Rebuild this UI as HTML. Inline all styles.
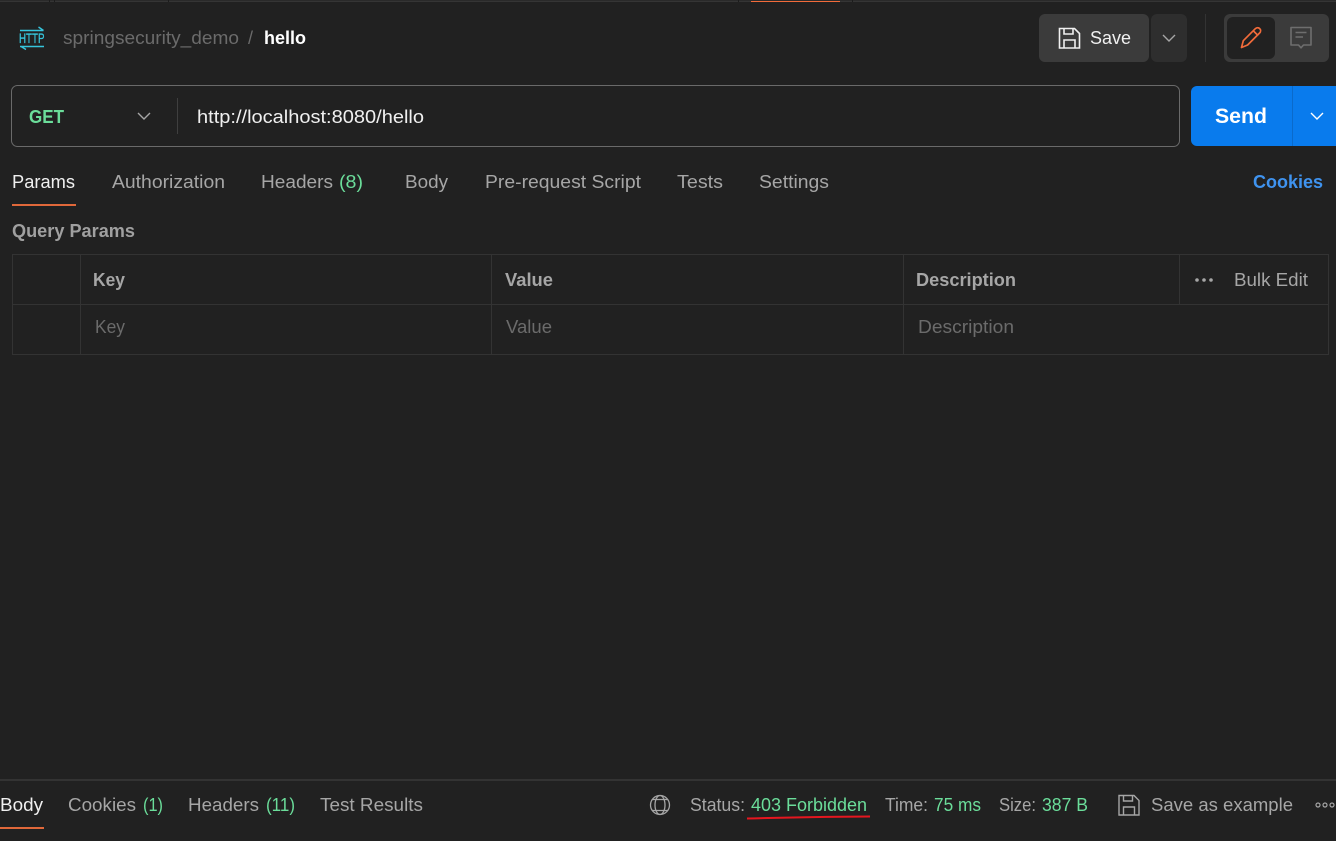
<!DOCTYPE html>
<html><head><meta charset="utf-8"><style>
html,body{margin:0;padding:0;background:#212121;width:1336px;height:841px;overflow:hidden}
svg{display:block}
text{font-family:"Liberation Sans",sans-serif;font-size:18px;fill:#a6a6a6}
.b{font-weight:700}
.g{fill:#6bdd9a}
.w{fill:#ffffff}
.d{fill:#6b6b6b}
</style></head><body>
<svg width="1336" height="841" viewBox="0 0 1336 841" xmlns="http://www.w3.org/2000/svg">
<rect width="1336" height="841" fill="#212121"/>
<!-- top edge -->
<rect x="0" y="0" width="1336" height="1" fill="#2a2a2a"/>
<rect x="0" y="1" width="1336" height="1" fill="#353535"/>
<g fill="#1c1c1c">
<rect x="49" y="0" width="1" height="2"/><rect x="54" y="0" width="1" height="2"/><rect x="168" y="0" width="1" height="2"/><rect x="738" y="0" width="1" height="2"/><rect x="852" y="0" width="1" height="2"/>
</g>
<rect x="751" y="1" width="89" height="1" fill="#f26b3a"/>

<!-- HTTP icon -->
<g fill="none" stroke="#36c5dc" stroke-width="1.4">
<path d="M20 30.5H43.500M38.500 27l5 3.500"/>
<path d="M20 46.500H44M21 46.500l5 3"/>
</g>
<text x="19" y="43" textLength="25.500" lengthAdjust="spacingAndGlyphs" style="font-size:14px;fill:#36c5dc;stroke:#36c5dc;stroke-width:.3">HTTP</text>

<text x="63" y="44" textLength="176" lengthAdjust="spacingAndGlyphs" style="fill:#6b6b6b">springsecurity_demo</text>
<text x="248" y="44" style="fill:#6b6b6b">/</text>
<text x="264" y="44" class="b w" textLength="42" lengthAdjust="spacingAndGlyphs">hello</text>

<!-- Save -->
<rect x="1039" y="14" width="110" height="48" rx="6" fill="#3b3b3b"/>
<path d="M1059.500 28.500h15l5 5v14.500h-20z M1064 28.500v5.500h9v-5.500 M1064 48v-8h11v8" fill="none" stroke="#f0f0f0" stroke-width="1.600"/>
<text x="1090" y="44" textLength="41" lengthAdjust="spacingAndGlyphs" style="fill:#f0f0f0">Save</text>
<rect x="1151" y="14" width="36" height="48" rx="6" fill="#2e2e2e"/>
<path d="M1163 35l6 6 6-6" fill="none" stroke="#a6a6a6" stroke-width="1.400"/>
<rect x="1205" y="14" width="1" height="48" fill="#333333"/>

<!-- Pencil / comment -->
<rect x="1224" y="14" width="105" height="48" rx="6" fill="#3b3b3b"/>
<rect x="1227" y="17" width="48" height="42" rx="6" fill="#212121"/>
<path d="M1241.500 47.500l1.800-6.800 12-12c1.300-1.300 3.200-1.300 4.400-.1s1.200 3.100-.1 4.400l-12 12z M1253 30.500l5.200 5.200" fill="none" stroke="#f26b3a" stroke-width="1.700" stroke-linejoin="round"/>
<path d="M1291 27.500h20v17.500h-7.500l-2.500 2.800-2.500-2.800h-7.500z" fill="none" stroke="#6e6e6e" stroke-width="1.600" stroke-linejoin="round"/>
<path d="M1295.500 32.500h11M1295.500 37h7.500" fill="none" stroke="#6e6e6e" stroke-width="1.600"/>

<!-- URL bar -->
<rect x="11.500" y="85.500" width="1168" height="61" rx="6" fill="#212121" stroke="#6a6a6a" stroke-width="1"/>
<text x="29" y="123" class="b" textLength="35" lengthAdjust="spacingAndGlyphs" style="fill:#6bdd9a">GET</text>
<path d="M138 113l6 6 6-6" fill="none" stroke="#a6a6a6" stroke-width="1.400"/>
<rect x="177" y="98" width="1" height="36" fill="#3f3f3f"/>
<text x="197" y="123" textLength="227" lengthAdjust="spacingAndGlyphs" style="fill:#f0f0f0">http://localhost:8080/hello</text>

<!-- Send -->
<path d="M1197 86H1336V146H1197a6 6 0 0 1-6-6V92a6 6 0 0 1 6-6z" fill="#097bed"/>
<rect x="1292" y="86" width="1" height="60" fill="#0a6acb"/>
<text x="1215" y="123" class="b w" textLength="52" lengthAdjust="spacingAndGlyphs" style="font-size:21px">Send</text>
<path d="M1311 113l6 6 6-6" fill="none" stroke="#ffffff" stroke-width="1.400"/>

<!-- Tabs -->
<text x="12" y="188" textLength="63" lengthAdjust="spacingAndGlyphs" style="fill:#f0f0f0">Params</text>
<rect x="12" y="204" width="64" height="2" fill="#e0683a"/>
<text x="112" y="188" textLength="113" lengthAdjust="spacingAndGlyphs">Authorization</text>
<text x="261" y="188" textLength="72" lengthAdjust="spacingAndGlyphs">Headers</text>
<text x="339" y="188" class="g" textLength="24" lengthAdjust="spacingAndGlyphs">(8)</text>
<text x="405" y="188" textLength="43" lengthAdjust="spacingAndGlyphs">Body</text>
<text x="485" y="188" textLength="156" lengthAdjust="spacingAndGlyphs">Pre-request Script</text>
<text x="677" y="188" textLength="46" lengthAdjust="spacingAndGlyphs">Tests</text>
<text x="759" y="188" textLength="70" lengthAdjust="spacingAndGlyphs">Settings</text>
<text x="1253" y="188" class="b" textLength="70" lengthAdjust="spacingAndGlyphs" style="fill:#3f93ef">Cookies</text>

<text x="12" y="237" class="b" textLength="123" lengthAdjust="spacingAndGlyphs" style="fill:#a0a0a0">Query Params</text>

<!-- Table -->
<g fill="#333333">
<rect x="12" y="254" width="1317" height="1"/>
<rect x="12" y="304" width="1317" height="1"/>
<rect x="12" y="354" width="1317" height="1"/>
<rect x="12" y="254" width="1" height="101"/>
<rect x="1328" y="254" width="1" height="101"/>
<rect x="80" y="254" width="1" height="101"/>
<rect x="491" y="254" width="1" height="101"/>
<rect x="903" y="254" width="1" height="101"/>
<rect x="1179" y="254" width="1" height="50"/>
</g>
<text x="93" y="286" class="b" textLength="32" lengthAdjust="spacingAndGlyphs">Key</text>
<text x="505" y="286" class="b" textLength="48" lengthAdjust="spacingAndGlyphs">Value</text>
<text x="916" y="286" class="b" textLength="100" lengthAdjust="spacingAndGlyphs">Description</text>
<g fill="#a6a6a6"><circle cx="1197" cy="280" r="1.800"/><circle cx="1204" cy="280" r="1.800"/><circle cx="1211" cy="280" r="1.800"/></g>
<text x="1234" y="286" textLength="74" lengthAdjust="spacingAndGlyphs">Bulk Edit</text>
<text x="95" y="333" class="d" textLength="30" lengthAdjust="spacingAndGlyphs">Key</text>
<text x="506" y="333" class="d" textLength="46" lengthAdjust="spacingAndGlyphs">Value</text>
<text x="918" y="333" class="d" textLength="96" lengthAdjust="spacingAndGlyphs">Description</text>

<!-- Bottom -->
<rect x="0" y="779" width="1336" height="2" fill="#333333"/>
<text x="0" y="811" textLength="43" lengthAdjust="spacingAndGlyphs" style="fill:#f0f0f0">Body</text>
<rect x="0" y="827" width="44" height="2" fill="#e0683a"/>
<text x="68" y="811" textLength="68" lengthAdjust="spacingAndGlyphs">Cookies</text>
<text x="143" y="811" class="g" textLength="20" lengthAdjust="spacingAndGlyphs">(1)</text>
<text x="188" y="811" textLength="71" lengthAdjust="spacingAndGlyphs">Headers</text>
<text x="266" y="811" class="g" textLength="29" lengthAdjust="spacingAndGlyphs">(11)</text>
<text x="320" y="811" textLength="103" lengthAdjust="spacingAndGlyphs">Test Results</text>

<g fill="none" stroke="#a6a6a6" stroke-width="1.300">
<circle cx="660" cy="805" r="9.500"/>
<ellipse cx="660" cy="805" rx="5" ry="9.500"/>
<path d="M652 799.500h16M652 810.500h16"/>
</g>
<text x="690" y="811" textLength="55" lengthAdjust="spacingAndGlyphs">Status:</text>
<text x="751" y="811" class="g" textLength="116" lengthAdjust="spacingAndGlyphs">403 Forbidden</text>
<path d="M747 818.500Q800 817 870 816.500" fill="none" stroke="#e5161f" stroke-width="2"/>
<text x="885" y="811" textLength="43" lengthAdjust="spacingAndGlyphs">Time:</text>
<text x="934" y="811" class="g" textLength="47" lengthAdjust="spacingAndGlyphs">75 ms</text>
<text x="999" y="811" textLength="37" lengthAdjust="spacingAndGlyphs">Size:</text>
<text x="1042" y="811" class="g" textLength="46" lengthAdjust="spacingAndGlyphs">387 B</text>
<path d="M1119 795.500h15l5 5v14.500h-20z M1123.500 795.500v5.500h9v-5.500 M1123.500 815v-8h11v8" fill="none" stroke="#a6a6a6" stroke-width="1.400"/>
<text x="1151" y="811" textLength="142" lengthAdjust="spacingAndGlyphs">Save as example</text>
<g fill="none" stroke="#a6a6a6" stroke-width="1.200"><circle cx="1318" cy="805" r="2"/><circle cx="1325" cy="805" r="2"/><circle cx="1332" cy="805" r="2"/></g>
</svg>
</body></html>
